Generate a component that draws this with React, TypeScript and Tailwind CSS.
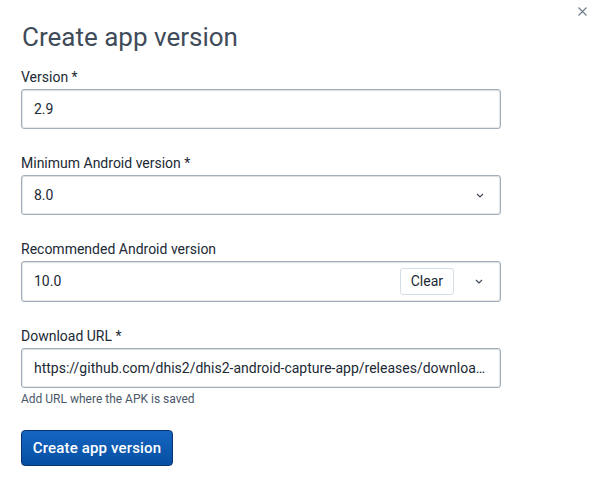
import React from "react";

const font = { fontFamily: "Roboto, 'Liberation Sans', sans-serif" };

function Chevron() {
  return (
    <svg width="8" height="5" viewBox="0 0 8 5" className="shrink-0">
      <path d="M1 1 L4 4 L7 1" fill="none" stroke="#404b5a" strokeWidth="1.2" />
    </svg>
  );
}

function Label({ children }: { children: React.ReactNode }) {
  return <div className="mb-1 h-4 text-[14px] leading-4 text-[#212934]">{children}</div>;
}

const boxClass =
  "flex h-10 w-[480px] items-center rounded-[3px] border border-[#a0adba] bg-white text-[14px] text-[#212934] shadow-[inset_0_0_0_1px_rgba(102,113,123,0.15),inset_0_1px_2px_0_rgba(102,113,123,0.1)]";

export default function App() {
  const url =
    "https://github.com/dhis2/dhis2-android-capture-app/releases/download/v2.9/dhis2-v2.9.apk";

  return (
    <div className="relative h-[488px] w-[594px] bg-white" style={font}>
      <button className="absolute right-[6px] top-[5px] flex h-[12px] w-[12px] items-center justify-center">
        <svg width="9" height="9" viewBox="0 0 9 9">
          <path d="M0.5 0.5 L8.5 8.5 M8.5 0.5 L0.5 8.5" stroke="#6e7a8a" strokeWidth="1.1" />
        </svg>
      </button>

      <div className="px-[21px] pt-[23px]">
        <h1 className="h-7 pl-px text-[26px] leading-7 text-[#404b5a]">Create app version</h1>

        <div className="mt-[18px] flex flex-col gap-[26px]">
          <div>
            <Label>Version *</Label>
            <div className={boxClass}>
              <span className="pl-3">2.9</span>
            </div>
          </div>

          <div>
            <Label>Minimum Android version *</Label>
            <div className={boxClass}>
              <span className="flex-1 pl-3">8.0</span>
              <span className="pr-4">
                <Chevron />
              </span>
            </div>
          </div>

          <div>
            <Label>Recommended Android version</Label>
            <div className={boxClass + " h-[41px]"}>
              <span className="flex-1 pl-3">10.0</span>
              <span className="flex h-[27px] items-center rounded-[3px] border border-[#d5dde5] bg-white px-[10px] text-[14px] text-[#212934]">
                Clear
              </span>
              <span className="pl-[21px] pr-[17px]">
                <Chevron />
              </span>
            </div>
          </div>

          <div>
            <Label>Download URL *</Label>
            <input
              readOnly
              value={url}
              className={boxClass + " px-3 text-ellipsis outline-none"}
              style={font}
            />
            <div className="mt-1 text-[12px] leading-[14px] text-[#4a5768]">
              Add URL where the APK is saved
            </div>
          </div>
        </div>

        <button className="mt-6 flex h-9 w-[152px] items-center justify-center rounded-[4px] border border-[#093371] bg-gradient-to-b from-[#1565c0] to-[#0650a3] text-[15px] font-medium tracking-[0.15px] text-white">
          Create app version
        </button>
      </div>
    </div>
  );
}
